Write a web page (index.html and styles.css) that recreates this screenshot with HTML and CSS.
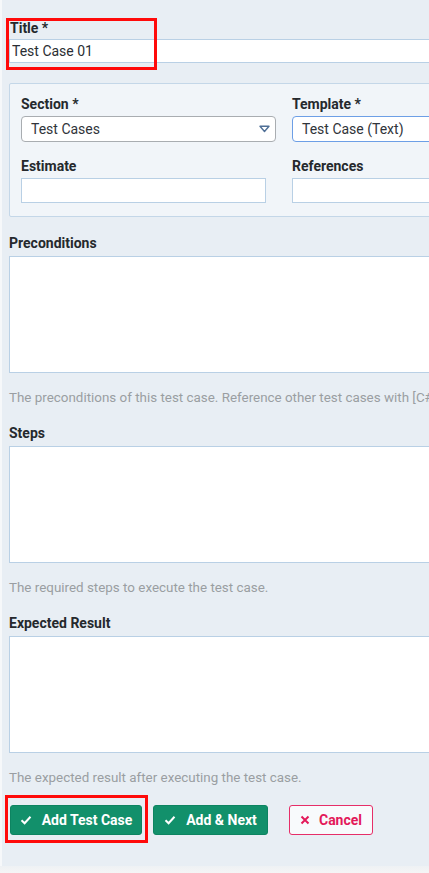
FILE: index.html
```html
<!DOCTYPE html>
<html lang="en">
<head>
<meta charset="utf-8">
<title>Add Test Case</title>
<link rel="stylesheet" href="styles.css">
</head>
<body>
<div class="page">
  <form class="form">
    <div class="field title-field">
      <label class="label">Title *</label>
      <input class="input title-input" type="text" value="Test Case 01">
      <span class="highlight highlight-title"></span>
    </div>

    <div class="box">
      <div class="grid">
        <div class="cell">
          <label class="label">Section *</label>
          <div class="select">
            <span>Test Cases</span>
            <svg class="caret" width="11" height="8" viewBox="0 0 11 8"><path d="M1 1.2 H10 L5.5 6.5 Z" fill="none" stroke="#4f6f96" stroke-width="1.4" stroke-linejoin="round"/></svg>
          </div>
        </div>
        <div class="cell">
          <label class="label">Template *</label>
          <div class="select focused"><span>Test Case (Text)</span></div>
        </div>
        <div class="cell">
          <label class="label">Estimate</label>
          <input class="input small" type="text">
        </div>
        <div class="cell">
          <label class="label">References</label>
          <input class="input wide" type="text">
        </div>
      </div>
    </div>

    <div class="field">
      <label class="label">Preconditions</label>
      <textarea class="area"></textarea>
      <p class="help">The preconditions of this test case. Reference other test cases with [C#] (e.g. [C17]) and use markdown.</p>
    </div>

    <div class="field">
      <label class="label">Steps</label>
      <textarea class="area"></textarea>
      <p class="help">The required steps to execute the test case.</p>
    </div>

    <div class="field">
      <label class="label">Expected Result</label>
      <textarea class="area"></textarea>
      <p class="help">The expected result after executing the test case.</p>
    </div>

    <div class="actions">
      <button type="button" class="btn btn-green btn-add">
        <svg width="12" height="10" viewBox="0 0 12 10"><path d="M1.5 5.2 L4.6 8.2 L10.5 1.8" fill="none" stroke="#fff" stroke-width="2"/></svg>
        <span>Add Test Case</span>
        <span class="highlight highlight-btn"></span>
      </button>
      <button type="button" class="btn btn-green btn-next">
        <svg width="12" height="10" viewBox="0 0 12 10"><path d="M1.5 5.2 L4.6 8.2 L10.5 1.8" fill="none" stroke="#fff" stroke-width="2"/></svg>
        <span>Add &amp; Next</span>
      </button>
      <button type="button" class="btn btn-cancel">
        <svg width="10" height="10" viewBox="0 0 10 10"><path d="M1.5 1.5 L8.5 8.5 M8.5 1.5 L1.5 8.5" fill="none" stroke="#e3195a" stroke-width="2"/></svg>
        <span>Cancel</span>
      </button>
    </div>
  </form>
</div>
<div class="foot"></div>
</body>
</html>
```

FILE: styles.css
```css
html, body {
  margin: 0;
  padding: 0;
  overflow: hidden;
  background: #f3f4f5;
}

body {
  font-family: Roboto, "Liberation Sans", Arial, sans-serif;
  color: #262a2e;
}

.page {
  background: #e8eef4;
  border-left: 2px solid #f6f8fa;
  height: 866px;
  box-sizing: border-box;
  padding: 19px 0 0 7px;
}

.form {
  width: 600px;
  display: flex;
  flex-direction: column;
}

.field {
  position: relative;
  display: flex;
  flex-direction: column;
}

.label {
  font-size: 14px;
  font-weight: 700;
  line-height: 18px;
  color: #25292d;
  display: block;
  margin-bottom: 3px;
}

.title-field .label {
  margin-left: 1px;
  margin-bottom: 2px;
}

.input {
  font: inherit;
  font-size: 14px;
  color: #2a2e33;
  background: #fff;
  border: 1px solid #b9d0e5;
  border-radius: 0;
  box-sizing: border-box;
  height: 24px;
  padding: 0 2px;
  outline: none;
}

.title-input {
  width: 600px;
}

.highlight {
  position: absolute;
  border: 3px solid #ff0a0a;
  box-sizing: border-box;
  pointer-events: none;
}

.highlight-title {
  left: -3px;
  top: -1px;
  width: 151px;
  height: 52px;
}

.box {
  margin-top: 20px;
  background: #f1f5f9;
  border: 1px solid #c4d7e8;
  border-radius: 2px;
  padding: 11px 12px 13px 11px;
}

.grid {
  display: grid;
  grid-template-columns: 255px 255px;
  column-gap: 16px;
  row-gap: 15px;
}

.cell {
  display: flex;
  flex-direction: column;
}

.select {
  height: 26px;
  box-sizing: border-box;
  background: #fff;
  border: 1px solid #a9adb1;
  border-radius: 4px;
  display: flex;
  align-items: center;
  justify-content: space-between;
  padding: 0 5px 0 9px;
  font-size: 14px;
  color: #30343a;
}

.select.focused {
  border: 1.5px solid #6d9fe6;
}

.caret {
  display: block;
}

.input.small {
  width: 245px;
  height: 25px;
}

.input.wide {
  width: 255px;
  height: 25px;
}

.field + .field {
  margin-top: 17px;
}

.box + .field {
  margin-top: 17px;
}

.area {
  display: block;
  width: 600px;
  height: 117px;
  box-sizing: border-box;
  background: #fff;
  border: 1px solid #b9d0e5;
  resize: none;
  margin: 1px 0 0 0;
  outline: none;
}

.help {
  margin: 16px 0 0 0;
  font-size: 13.4px;
  line-height: 18px;
  color: #9a9ea2;
  white-space: nowrap;
}

.actions {
  margin-top: 18px;
  display: flex;
  align-items: center;
}

.btn {
  position: relative;
  font: inherit;
  font-size: 14px;
  font-weight: 700;
  height: 30px;
  box-sizing: border-box;
  border-radius: 3px;
  display: inline-flex;
  align-items: center;
  justify-content: center;
  gap: 10px;
  padding: 0;
  white-space: nowrap;
  cursor: pointer;
}

.btn-green {
  background: #12906b;
  border: 1px solid #0d8461;
  color: #fff;
}

.btn-add {
  margin-left: 1px;
  width: 132px;
}

.btn-next {
  margin-left: 11px;
  width: 115px;
}

.btn-cancel {
  margin-left: 21px;
  width: 84px;
  background: #f8fafc;
  border: 1.5px solid #e62e68;
  color: #e3195a;
  gap: 9px;
}

.highlight-btn {
  left: -6px;
  top: -11px;
  width: 143px;
  height: 48px;
}

.foot {
  height: 7px;
  background: linear-gradient(#eef1f4, #f5f5f5);
}
```
